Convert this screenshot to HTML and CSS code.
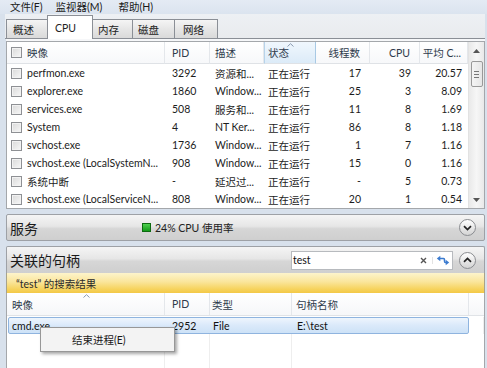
FILE: index.html
```html
<!DOCTYPE html>
<html lang="zh-CN">
<head>
<meta charset="utf-8">
<title>资源监视器</title>
<link rel="stylesheet" href="styles.css">
</head>
<body>
<div class="win">
  <div class="menubar">
    <span class="menu m1">文件(F)</span>
    <span class="menu m2">监视器(M)</span>
    <span class="menu">帮助(H)</span>
  </div>
  <div class="main">
    <div class="tabs">
      <div class="tab t1">概述</div>
      <div class="tab active t2">CPU</div>
      <div class="tab t3">内存</div>
      <div class="tab t4">磁盘</div>
      <div class="tab t5">网络</div>
    </div>
    <div class="panel">
      <div class="table">
        <div class="grid">
          <div class="th c-name"><span class="cb"></span>映像</div>
          <div class="th c-pid">PID</div>
          <div class="th c-desc">描述</div>
          <div class="th c-stat hover"><svg class="sort" width="7" height="4" viewBox="0 0 7 4"><path d="M0.5 3.5L3.5 0.7L6.5 3.5" fill="none" stroke="#8a9ab0" stroke-width="1"/></svg>状态</div>
          <div class="th c-thr">线程数</div>
          <div class="th c-cpu">CPU</div>
          <div class="th c-avg">平均 C...</div>

          <div class="td c-name"><span class="cb"></span>perfmon.exe</div>
          <div class="td c-pid">3292</div>
          <div class="td c-desc">资源和...</div>
          <div class="td c-stat">正在运行</div>
          <div class="td c-thr">17</div>
          <div class="td c-cpu">39</div>
          <div class="td c-avg">20.57</div>

          <div class="td c-name"><span class="cb"></span>explorer.exe</div>
          <div class="td c-pid">1860</div>
          <div class="td c-desc">Window...</div>
          <div class="td c-stat">正在运行</div>
          <div class="td c-thr">25</div>
          <div class="td c-cpu">3</div>
          <div class="td c-avg">8.09</div>

          <div class="td c-name"><span class="cb"></span>services.exe</div>
          <div class="td c-pid">508</div>
          <div class="td c-desc">服务和...</div>
          <div class="td c-stat">正在运行</div>
          <div class="td c-thr">11</div>
          <div class="td c-cpu">8</div>
          <div class="td c-avg">1.69</div>

          <div class="td c-name"><span class="cb"></span>System</div>
          <div class="td c-pid">4</div>
          <div class="td c-desc">NT Ker...</div>
          <div class="td c-stat">正在运行</div>
          <div class="td c-thr">86</div>
          <div class="td c-cpu">8</div>
          <div class="td c-avg">1.18</div>

          <div class="td c-name"><span class="cb"></span>svchost.exe</div>
          <div class="td c-pid">1736</div>
          <div class="td c-desc">Window...</div>
          <div class="td c-stat">正在运行</div>
          <div class="td c-thr">1</div>
          <div class="td c-cpu">7</div>
          <div class="td c-avg">1.16</div>

          <div class="td c-name"><span class="cb"></span>svchost.exe (LocalSystemN...</div>
          <div class="td c-pid">908</div>
          <div class="td c-desc">Window...</div>
          <div class="td c-stat">正在运行</div>
          <div class="td c-thr">15</div>
          <div class="td c-cpu">0</div>
          <div class="td c-avg">1.16</div>

          <div class="td c-name"><span class="cb"></span>系统中断</div>
          <div class="td c-pid">-</div>
          <div class="td c-desc">延迟过...</div>
          <div class="td c-stat">正在运行</div>
          <div class="td c-thr">-</div>
          <div class="td c-cpu">5</div>
          <div class="td c-avg">0.73</div>

          <div class="td c-name"><span class="cb"></span>svchost.exe (LocalServiceN...</div>
          <div class="td c-pid">808</div>
          <div class="td c-desc">Window...</div>
          <div class="td c-stat">正在运行</div>
          <div class="td c-thr">20</div>
          <div class="td c-cpu">1</div>
          <div class="td c-avg">0.54</div>
        </div>
        <div class="vscroll">
          <div class="arrow"><svg width="7" height="4" viewBox="0 0 7 4"><path d="M0 4L3.5 0L7 4z" fill="#555"/></svg></div>
          <div class="thumb"><span class="grip"></span><span class="grip"></span><span class="grip"></span></div>
          <div class="track"></div>
          <div class="arrow"><svg width="7" height="4" viewBox="0 0 7 4"><path d="M0 0L3.5 4L7 0z" fill="#555"/></svg></div>
        </div>
      </div>
    </div>

    <div class="bar services">
      <div class="bar-title">服务</div>
      <span class="led"></span>
      <span class="usage">24% CPU 使用率</span>
      <span class="chev push"><svg width="9" height="6" viewBox="0 0 9 6"><path d="M1 1.2L4.5 4.6L8 1.2" fill="none" stroke="#222" stroke-width="1.7"/></svg></span>
    </div>

    <div class="bar handles">
      <div class="bar-title">关联的句柄</div>
      <div class="search">
        <span class="q">test</span>
        <span class="clear"><svg width="7" height="7" viewBox="0 0 7 7"><path d="M1 1L6 6M6 1L1 6" stroke="#555" stroke-width="1.4"/></svg></span>
        <span class="refresh"><svg width="14" height="11" viewBox="0 0 14 11"><path d="M4 3.5H7.5Q8.5 3.5 8.5 5V6Q8.5 7.5 9.5 7.5H10" fill="none" stroke="#3b7bd0" stroke-width="1.6"/><path d="M0.8 3.5L4.3 0.8V6.2z" fill="#3b7bd0"/><path d="M13.2 7.5L9.7 4.8V10.2z" fill="#3b7bd0"/></svg></span>
      </div>
      <span class="chev"><svg width="9" height="6" viewBox="0 0 9 6"><path d="M1 4.8L4.5 1.4L8 4.8" fill="none" stroke="#222" stroke-width="1.7"/></svg></span>
    </div>

    <div class="results">“test” 的搜索结果</div>

    <div class="htable">
      <div class="hhead">
        <div class="hh h-name"><svg class="sort" width="7" height="4" viewBox="0 0 7 4"><path d="M0.5 3.5L3.5 0.7L6.5 3.5" fill="none" stroke="#8a9ab0" stroke-width="1"/></svg>映像</div>
        <div class="hh h-pid">PID</div>
        <div class="hh h-type">类型</div>
        <div class="hh h-hname">句柄名称</div>
        <div class="hh h-rest"></div>
      </div>
      <div class="hbody">
        <div class="selrow">
          <div class="sc s-name">cmd.exe</div>
          <div class="sc s-pid">2952</div>
          <div class="sc s-type">File</div>
          <div class="sc s-hname">E:\test</div>
        </div>
        <div class="fill"></div>
        <div class="fill"></div>
        <div class="fill"></div>
        <div class="fill"></div>
        <div class="fill last"></div>
      </div>
    </div>
  </div>

  <div class="ctxmenu">结束进程(E)</div>
</div>
</body>
</html>
```

FILE: styles.css
```css
* { box-sizing: border-box; margin: 0; padding: 0; }

body {
  width: 487px;
  height: 368px;
  overflow: hidden;
  font-family: "Lato", "Noto Sans CJK SC", sans-serif;
  font-size: 10.5px;
  color: #1c1c1c;
  background: #d8e1ec;
}

.win {
  position: relative;
  height: 368px;
  display: flex;
  flex-direction: column;
  overflow: hidden;
}

/* menu */
.menubar {
  height: 14px;
  display: flex;
  align-items: center;
  padding-left: 10px;
  background: linear-gradient(#e4ebf4, #dbe4ef);
  color: #1a1a1a;
}
.menu { white-space: nowrap; line-height: 14px; }
.m1 { margin-right: 13px; }
.m2 { margin-right: 16px; }

.main {
  flex: 1;
  display: flex;
  flex-direction: column;
  padding: 0 2px 0 6px;
  min-height: 0;
}

/* tabs */
.tabs {
  height: 25px;
  display: flex;
  align-items: flex-end;
  padding-left: 1px;
  background: linear-gradient(#edf0f4, #e9ebee);
  border-bottom: 1px solid #8b8f96;
  margin-left: -1px;
}
.tab {
  height: 19px;
  display: flex;
  align-items: center;
  padding-left: 6px;
  border: 1px solid #8b8f96;
  border-bottom: none;
  margin-right: -1px;
  background: linear-gradient(#f5f5f5, #e6e6e6 50%, #dadada);
  color: #222;
  white-space: nowrap;
}
.t1 { width: 42px; }
.t2 { width: 46px; padding-left: 7px; }
.t3 { width: 41px; padding-left: 5px; }
.t4 { width: 43px; padding-left: 5px; }
.t5 { width: 44px; padding-left: 8px; }
.tab.active {
  height: 24px;
  margin-bottom: -1px;
  background: #fff;
  position: relative;
  z-index: 1;
}

/* cpu panel */
.panel {
  padding-top: 2px;
  background: #f6f7f9;
}
.table {
  height: 168px;
  border: 1px solid #a4a7ab;
  background: #fff;
  display: flex;
}
.grid {
  display: grid;
  grid-template-columns: 158px 45px 54px 52px 54px 50px 48px;
  grid-template-rows: 22px;
  grid-auto-rows: 18px;
  align-content: start;
}
.th, .td {
  display: flex;
  align-items: center;
  white-space: nowrap;
  overflow: hidden;
}
.th {
  position: relative;
  background: linear-gradient(#ffffff, #f7f8fa);
  border-right: 1px solid #e4e7eb;
  border-bottom: 1px solid #dfe2e6;
  color: #2f3b4c;
}
.th.hover {
  background: linear-gradient(#f0f7fd, #dcebf8);
  border-left: 1px solid #b7d3ea;
  border-right: 1px solid #a8c9e4;
}
.sort {
  position: absolute;
  left: 50%;
  top: 1px;
  margin-left: -3px;
}
.c-name { padding-left: 4px; }
.c-pid { padding-left: 7px; }
.c-desc { padding-left: 5px; }
.c-stat { padding-left: 4px; }
.th.c-stat { padding-left: 3px; }
.c-thr { justify-content: flex-end; padding-right: 9px; }
.c-cpu { justify-content: flex-end; padding-right: 9px; }
.c-avg { justify-content: flex-end; padding-right: 6px; }

.cb {
  flex: none;
  width: 11px;
  height: 11px;
  margin-right: 5px;
  border: 1px solid #8e9094;
  background: linear-gradient(135deg, #d9d9d9, #f7f7f7);
  box-shadow: inset 0 0 0 1px #f2f2f2;
}

/* scrollbar */
.vscroll {
  width: 16px;
  display: flex;
  flex-direction: column;
  align-items: center;
  background: linear-gradient(90deg, #e9e9e9, #f6f6f6 50%, #e9e9e9);
  border-left: 1px solid #e2e2e2;
}
.arrow {
  height: 17px;
  display: flex;
  align-items: center;
  justify-content: center;
}
.thumb {
  width: 12px;
  height: 26px;
  margin-top: 2px;
  border: 1px solid #999;
  border-radius: 2px;
  background: linear-gradient(90deg, #f4f4f4, #e6e6e6);
  display: flex;
  flex-direction: column;
  align-items: center;
  justify-content: center;
  gap: 2px;
}
.grip {
  width: 5px;
  height: 1px;
  background: #777;
}
.track { flex: 1; }

/* bars */
.bar {
  height: 27px;
  margin-top: 5px;
  display: flex;
  align-items: center;
  padding: 0 8px 0 3px;
  border: 1px solid #9ea1a6;
  border-radius: 2px;
  background: linear-gradient(#f5f5f5, #e6e6e6 45%, #d6d6d6 55%, #cfcfcf);
}
.bar-title {
  font-size: 14px;
  color: #1a1a1a;
  width: 132px;
  white-space: nowrap;
}
.led {
  width: 9px;
  height: 9px;
  border: 1px solid #0d6a10;
  background: linear-gradient(#4fd04f, #139b18);
  margin-right: 4px;
}
.usage { color: #222; white-space: nowrap; }
.chev {
  flex: none;
  width: 17px;
  height: 17px;
  border-radius: 50%;
  border: 1px solid #8a8c90;
  background: linear-gradient(#ffffff, #e4e4e4 60%, #d4d4d4);
  display: flex;
  align-items: center;
  justify-content: center;
}
.chev.push { margin-left: auto; }
.handles { border-bottom: none; border-radius: 2px 2px 0 0; }
.search {
  margin-left: auto;
  margin-right: 6px;
  width: 162px;
  height: 19px;
  background: #fff;
  border: 1px solid #b7babe;
  display: flex;
  align-items: center;
  padding-left: 1px;
}
.q { flex: 1; color: #111; }
.clear {
  display: flex;
  justify-content: center;
  border-right: 1px solid #e3e3e3;
  margin-right: 3px;
  padding-right: 3px;
  width: 16px;
}
.refresh {
  width: 16px;
  display: flex;
  align-items: center;
}

.results {
  height: 20px;
  display: flex;
  align-items: center;
  padding-left: 9px;
  border-left: 1px solid #a8a38a;
  border-right: 1px solid #a8a38a;
  background: linear-gradient(#fdf4cc, #fae59a 45%, #f6d35e 80%, #f3c846);
  color: #2a2a2a;
  white-space: nowrap;
}

/* handle table */
.htable {
  flex: 1;
  display: flex;
  flex-direction: column;
  background: #fff;
  border-left: 1px solid #a4a7ab;
  border-right: 1px solid #a4a7ab;
  min-height: 0;
}
.hhead {
  height: 23px;
  display: grid;
  grid-template-columns: 158px 45px 82px 177px 1fr;
  border-bottom: 1px solid #e0e3e7;
  background: linear-gradient(#ffffff, #f6f7f9);
}
.hh {
  position: relative;
  display: flex;
  align-items: center;
  border-right: 1px solid #e4e7eb;
  color: #2f3b4c;
  white-space: nowrap;
}
.hh.h-rest { border-right: none; }
.h-name { padding-left: 5px; }
.h-pid { padding-left: 7px; }
.h-type { padding-left: 2px; }
.h-hname { padding-left: 4px; }

.hbody {
  flex: 1;
  display: grid;
  grid-template-columns: 158px 45px 82px 177px 1fr;
  grid-template-rows: 17px 1fr;
  padding-top: 1px;
}
.selrow {
  grid-column: 1 / 5;
  margin-left: 1px;
  display: grid;
  grid-template-columns: 157px 45px 82px 1fr;
  border: 1px solid #8fb4df;
  border-radius: 2px;
  background: linear-gradient(#eef5fd, #dae9fa 50%, #cde2f7);
}
.sc {
  display: flex;
  align-items: center;
  white-space: nowrap;
  color: #111;
}
.s-name { padding-left: 3px; }
.s-pid { padding-left: 6px; }
.s-type { padding-left: 2px; }
.s-hname { padding-left: 4px; }
.fill { border-right: 1px solid #eeeeee; }
.fill.last { border-right: none; }

/* context menu */
.ctxmenu {
  position: absolute;
  left: 40px;
  top: 327px;
  width: 135px;
  height: 25px;
  padding-left: 31px;
  display: flex;
  align-items: center;
  background: #f3f3f3;
  border: 1px solid #979797;
  box-shadow: 2px 2px 3px rgba(0, 0, 0, 0.35);
  color: #1a1a1a;
  white-space: nowrap;
}
```
